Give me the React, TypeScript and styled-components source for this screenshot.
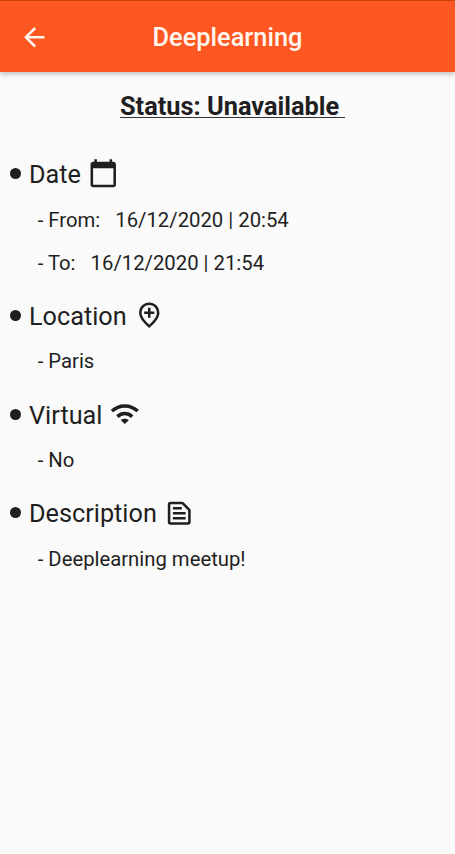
import React from 'react';
import styled, { createGlobalStyle } from 'styled-components';

const GlobalStyle = createGlobalStyle`
  * { box-sizing: border-box; }
  body { margin: 0; background: #fafafa; }
`;

const Screen = styled.div`
  min-height: 854px;
  background: #fafafa;
  color: #1f1f1f;
  font-family: Roboto, sans-serif;
  white-space: pre;
`;

const AppBar = styled.header`
  display: grid;
  grid-template-columns: 70px 1fr 70px;
  align-items: center;
  height: 72px;
  padding-top: 1px;
  border-top: 1px solid #c8420f;
  background: #ff5722;
  color: #fff6ee;
  box-shadow: 0 2px 5px rgba(40, 30, 0, 0.27);
`;

const BackButton = styled.button`
  display: flex;
  justify-content: center;
  padding: 0 1px 0 0;
  border: 0;
  background: none;
  color: inherit;
`;

const Title = styled.h1`
  margin: 0;
  font-size: 25.4px;
  font-weight: 500;
  line-height: 31px;
  text-align: center;
`;

const Status = styled.h2`
  width: fit-content;
  height: 24px;
  margin: 22px 0 0 120px;
  border-bottom: 1px solid #333;
  font-size: 25.35px;
  font-weight: 700;
  line-height: 25px;
`;

const Section = styled.section`
  padding-left: 10px;
`;

const Details = styled.main`
  display: flex;
  flex-direction: column;
  gap: 11.7px;
  padding-top: 33.7px;
`;

const Heading = styled.h3`
  display: flex;
  align-items: center;
  gap: 7px;
  height: 44px;
  margin: 0;
  font-size: 25.25px;
  font-weight: 400;
`;

const Label = styled.span`
  display: flex;
  align-items: center;
  gap: 8px;

  &::before {
    content: '';
    width: 11px;
    height: 11px;
    border-radius: 50%;
    background: currentColor;
  }
`;

const LabelText = styled.span`
  padding-top: 2px;
`;

const Value = styled.p`
  height: 43px;
  margin: 0;
  padding-left: 27.7px;
  font-size: 20.3px;
  line-height: 48px;
`;

const Glyph = styled.svg`
  display: block;
  flex: none;
  fill: currentColor;
`;

const paths = {
  back: 'M20 11H7.83l5.59-5.59L12 4l-8 8 8 8 1.41-1.41L7.83 13H20v-2z',
  calendar:
    'M20 3h-1V1h-2v2H7V1H5v2H4c-1.1 0-2 .9-2 2v16c0 1.1.9 2 2 2h16c1.1 0 2-.9 2-2V5c0-1.1-.9-2-2-2zm0 18H4V8h16v13z',
  pin: 'M13 6v3h3v2h-3v3h-2v-3H8V9h3V6h2zm5 4.2C18 6.57 15.35 4 12 4s-6 2.57-6 6.2c0 2.34 1.95 5.44 6 9.14 4.05-3.7 6-6.8 6-9.14zM12 2c4.2 0 8 3.22 8 8.2 0 3.32-2.67 7.25-8 11.8-5.33-4.55-8-8.48-8-11.8C4 5.22 7.8 2 12 2z',
  note: 'M14.17 5L19 9.83V19H5V5h9.17m0-2H5c-1.1 0-2 .9-2 2v14c0 1.1.9 2 2 2h14c1.1 0 2-.9 2-2V9.83c0-.53-.21-1.04-.59-1.41l-4.83-4.83c-.37-.38-.88-.59-1.41-.59zM7 15h10v2H7v-2zm0-4h10v2H7v-2zm0-4h7v2H7V7z',
};

type PathName = keyof typeof paths;

const Icon = ({ name }: { name: PathName }) => (
  <Glyph viewBox="0 0 24 24" width="30.5" height="30.5" aria-hidden>
    <path d={paths[name]} />
  </Glyph>
);

const WifiIcon = () => (
  <Glyph viewBox="0 0 30.5 30.5" width="30.5" height="30.5" aria-hidden>
    <g fill="none" stroke="currentColor" strokeWidth="3.5">
      <path d="M2.9 12.1C10.2 5.2 21.4 5.2 28.7 12.1" />
      <path d="M8.4 17.6C12.7 13.6 18.9 13.6 23.2 17.6" />
    </g>
    <path d="M11.8 21.2C14 19.3 17.6 19.3 19.8 21.2L15.8 25.1z" />
  </Glyph>
);

const sections = [
  {
    label: 'Date',
    icon: <Icon name="calendar" />,
    values: ['- From:   16/12/2020 | 20:54', '- To:   16/12/2020 | 21:54'],
  },
  { label: 'Location', icon: <Icon name="pin" />, values: ['- Paris'] },
  { label: 'Virtual', icon: <WifiIcon />, values: ['- No'] },
  { label: 'Description', icon: <Icon name="note" />, values: ['- Deeplearning meetup!'] },
];

export default function App() {
  return (
    <>
      <GlobalStyle />
      <Screen>
        <AppBar>
          <BackButton aria-label="Back">
            <Icon name="back" />
          </BackButton>
          <Title>Deeplearning</Title>
        </AppBar>
        <Status>{'Status: Unavailable '}</Status>
        <Details>
          {sections.map(({ label, icon, values }) => (
            <Section key={label}>
              <Heading>
                <Label>
                  <LabelText>{label}</LabelText>
                </Label>
                {icon}
              </Heading>
              {values.map((value) => (
                <Value key={value}>{value}</Value>
              ))}
            </Section>
          ))}
        </Details>
      </Screen>
    </>
  );
}
